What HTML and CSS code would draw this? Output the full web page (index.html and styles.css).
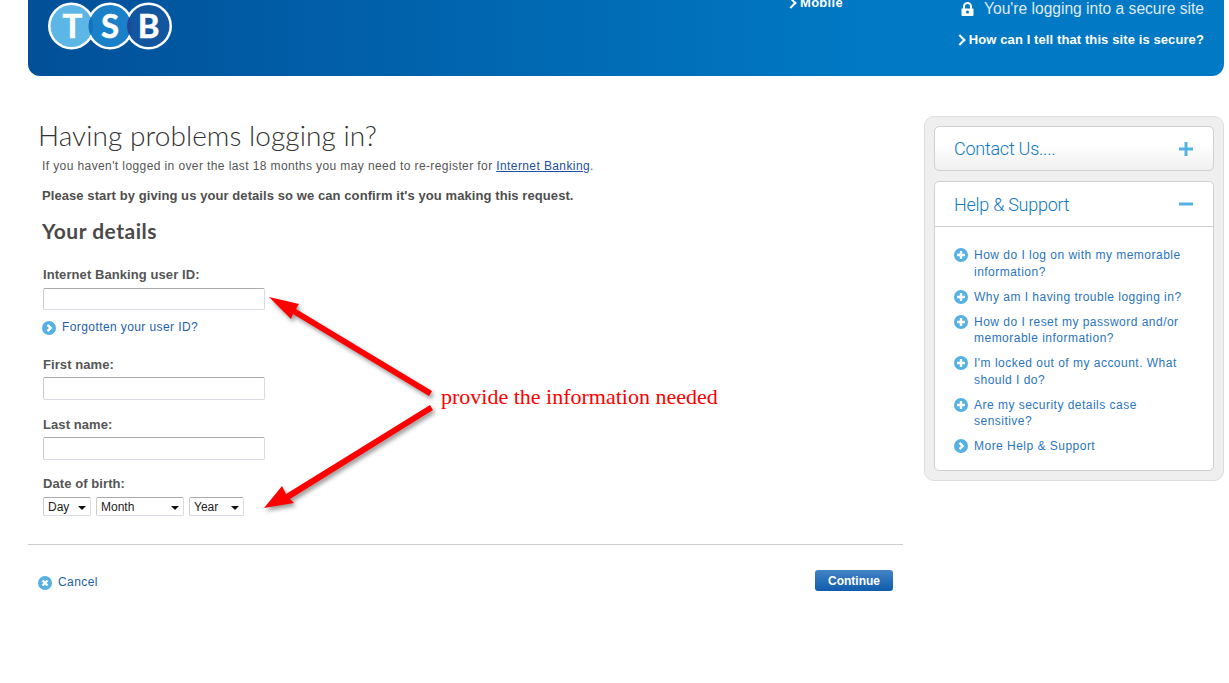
FILE: index.html
```html
<!DOCTYPE html>
<html lang="en">
<head>
<meta charset="utf-8">
<title>Having problems logging in?</title>
<link rel="stylesheet" href="styles.css">
</head>
<body>
<header class="top">
  <svg class="logo" width="124" height="52" viewBox="0 0 124 52">
    <g fill="#fff">
      <circle cx="23.500" cy="26" r="23.500"/>
      <circle cx="62" cy="26" r="23.500"/>
      <circle cx="100.500" cy="26" r="23.500"/>
    </g>
    <circle cx="23.500" cy="26" r="21" fill="#5cb6e6"/>
    <circle cx="100.500" cy="26" r="21" fill="#11569f"/>
    <circle cx="62" cy="26" r="21" fill="#1a80c8"/>
    <path d="M42.750 16.700A21 21 0 0 1 42.750 35.300A21 21 0 0 1 42.750 16.700z" fill="#1272ba"/>
    <path d="M81.250 16.700A21 21 0 0 1 81.250 35.300A21 21 0 0 1 81.250 16.700z" fill="#24479b"/>
    <text class="logo-t" x="24.500" y="38">T</text>
    <text class="logo-t" x="62" y="38">S</text>
    <text class="logo-t" x="100.500" y="38">B</text>
  </svg>
  <a class="mobile chev" href="#">Mobile</a>
  <div class="secure">
    <div class="secure-line">
      <svg width="13" height="15" viewBox="0 0 13 15"><path d="M3 7V4.500a3.500 3.500 0 0 1 7 0V7" fill="none" stroke="#fff" stroke-width="2"/><path fill-rule="evenodd" d="M1 6.500h11a.500.500 0 0 1 .500.500v6a1 1 0 0 1-1 1h-10a1 1 0 0 1-1-1V7a.500.500 0 0 1 .500-.500zM6.500 8.500a1.500 1.500 0 1 0 0 3 1.500 1.500 0 0 0 0-3z" fill="#fff"/></svg>
      <span>You're logging into a secure site</span>
    </div>
    <a class="secure-link chev" href="#">How can I tell that this site is secure?</a>
  </div>
</header>

<main class="page">
  <section class="content">
    <div class="form-area">
      <h1>Having problems logging in?</h1>
      <p class="intro">If you haven't logged in over the last 18 months you may need to re-register for <a href="#">Internet Banking</a>.</p>
      <p class="lead">Please start by giving us your details so we can confirm it's you making this request.</p>
      <h2>Your details</h2>
      <label class="lbl first" for="uid">Internet Banking user ID:</label>
      <input class="txt" id="uid" type="text">
      <a class="icon-link forgot" href="#"><svg class="ic" viewBox="0 0 14 14"><use href="#go"/></svg>Forgotten your user ID?</a>
      <label class="lbl l-first" for="fn">First name:</label>
      <input class="txt tall" id="fn" type="text">
      <label class="lbl l-last" for="ln">Last name:</label>
      <input class="txt tall" id="ln" type="text">
      <label class="lbl l-dob">Date of birth:</label>
      <div class="dob">
        <span class="sel day">Day</span>
        <span class="sel month">Month</span>
        <span class="sel year">Year</span>
      </div>
    </div>
    <div class="actions">
      <a class="icon-link cancel" href="#"><svg class="ic" viewBox="0 0 14 14"><circle cx="7" cy="7" r="7" fill="#55b1e4"/><path d="M4.500 4.500l5 5M9.500 4.500l-5 5" stroke="#fff" stroke-width="2.400"/></svg>Cancel</a>
      <button class="continue" type="button">Continue</button>
    </div>
  </section>

  <aside class="side">
    <div class="panel closed">
      <span class="panel-title">Contact Us....</span>
      <svg width="14" height="14" viewBox="0 0 14 14"><path d="M0 7h14M7 0v14" stroke="#55b1e4" stroke-width="3"/></svg>
    </div>
    <div class="panel open">
      <div class="panel-head">
        <span class="panel-title">Help &amp; Support</span>
        <svg width="14" height="14" viewBox="0 0 14 14"><path d="M0 6h14" stroke="#55b1e4" stroke-width="3"/></svg>
      </div>
      <ul class="help">
        <li><svg class="ic" viewBox="0 0 14 14"><use href="#plus"/></svg><a href="#">How do I log on with my memorable information?</a></li>
        <li><svg class="ic" viewBox="0 0 14 14"><use href="#plus"/></svg><a href="#">Why am I having trouble logging in?</a></li>
        <li><svg class="ic" viewBox="0 0 14 14"><use href="#plus"/></svg><a href="#">How do I reset my password and/or memorable information?</a></li>
        <li><svg class="ic" viewBox="0 0 14 14"><use href="#plus"/></svg><a href="#">I'm locked out of my account. What should I do?</a></li>
        <li><svg class="ic" viewBox="0 0 14 14"><use href="#plus"/></svg><a href="#">Are my security details case sensitive?</a></li>
        <li><svg class="ic" viewBox="0 0 14 14"><use href="#go"/></svg><a href="#">More Help &amp; Support</a></li>
      </ul>
    </div>
  </aside>
</main>

<svg class="arrows" width="1229" height="683" viewBox="0 0 1229 683">
  <g fill="#f00" stroke="none">
    <path d="M432 391 L296 309 L299 304 L269 297 L291 319 L293 314 L429 396 Z"/>
    <path d="M430 405 L286 494 L282 486 L264 508 L294 503 L290 499 L433 410 Z"/>
  </g>
</svg>
<div class="note">provide the information needed</div>

<svg width="0" height="0" class="defs">
  <defs>
    <g id="plus"><circle cx="7" cy="7" r="7" fill="#55b1e4"/><path d="M3 7h8M7 3v8" stroke="#fff" stroke-width="2.400"/></g>
    <g id="go"><circle cx="7" cy="7" r="7" fill="#55b1e4"/><path d="M5.500 3.800L8.700 7L5.500 10.200" fill="none" stroke="#fff" stroke-width="2.400"/></g>
  </defs>
</svg>
</body>
</html>
```
FILE: styles.css
```css
* { box-sizing: border-box; }
html, body { margin: 0; padding: 0; }
body {
  width: 1229px;
  height: 683px;
  overflow: hidden;
  background: #fff;
  font-family: "Liberation Sans", Arial, sans-serif;
  color: #555;
  position: relative;
}
a { color: #1d5fa8; text-decoration: none; }

.top {
  margin-left: 28px;
  width: 1196px;
  height: 76px;
  border-radius: 0 0 12px 12px;
  background: linear-gradient(90deg, #015098 0%, #0164ae 35%, #0179c4 70%, #0179c4 100%);
  display: flex;
  align-items: flex-start;
  color: #fff;
  padding-right: 20px;
}
.logo { margin-left: 20px; flex: none; }
.logo-t { font: 700 33px "Lato", "Liberation Sans", sans-serif; fill: #fff; text-anchor: middle; stroke: #fff; stroke-width: .5px; }
.mobile {
  margin-left: 617px;
  margin-top: -5px;
  color: #fff;
  font-weight: 700;
  font-size: 13px;
  line-height: 15px;
  letter-spacing: .3px;
}
.chev { position: relative; padding-left: 11px; }
.chev::before {
  content: "";
  position: absolute;
  left: -2px;
  top: 4px;
  width: 6px;
  height: 6px;
  border-top: 2px solid #fff;
  border-right: 2px solid #fff;
  transform: rotate(45deg);
}
.secure {
  margin-left: auto;
  display: flex;
  flex-direction: column;
  align-items: flex-end;
}
.secure-line {
  display: flex;
  align-items: center;
  gap: 10px;
  height: 18px;
  font-size: 15.600px;
  color: #dfeaf4;
}
.secure-link {
  margin-top: 14px;
  color: #fff;
  font-weight: 700;
  font-size: 13px;
  line-height: 15px;
  letter-spacing: .1px;
}

.page {
  display: flex;
  margin-left: 28px;
  margin-top: 40px;
  width: 1196px;
  justify-content: space-between;
  align-items: flex-start;
}
.content { width: 875px; }
.form-area {
  height: 429px;
  border-bottom: 1px solid #ccc;
  padding-left: 14px;
  display: flex;
  flex-direction: column;
  align-items: flex-start;
}
h1 {
  margin: 1px 0 0 -4px;
  font: 300 28px/36px "Lato", sans-serif;
  letter-spacing: .07px;
  color: #333;
}
.intro { margin: 6px 0 0; font-size: 12px; line-height: 15px; letter-spacing: .4px; color: #555; }
.intro a { color: #1d4f9c; text-decoration: underline; }
.lead { margin: 14px 0 0; font-size: 13px; line-height: 15px; letter-spacing: .08px; font-weight: 700; color: #4e4e4e; }
h2 { margin: 16px 0 0; font: 700 21px/24px "Lato", sans-serif; letter-spacing: .5px; color: #4a4a4a; }
.lbl { display: block; margin-left: 1px; font-size: 13px; line-height: 15px; letter-spacing: .08px; font-weight: 700; color: #555; }
.first { margin-top: 24px; }
.l-first { margin-top: 22px; }
.l-last { margin-top: 17px; }
.l-dob { margin-top: 16px; }
.txt {
  display: block;
  margin: 6px 0 0 1px;
  width: 222px;
  height: 22px;
  background: #fff;
  border: 1px solid #d9dde3;
  border-top-color: #aaa;
  border-left-color: #ccc;
  border-radius: 2px;
  padding: 0 4px;
}
.tall { margin-top: 5px; height: 23px; }
.icon-link { display: flex; align-items: center; gap: 6px; font-size: 12px; line-height: 15px; letter-spacing: .41px; }
.ic { width: 14px; height: 14px; flex: none; }
.forgot { margin-top: 10px; }
.dob { display: flex; gap: 5px; margin: 6px 0 0 1px; }
.sel {
  position: relative;
  display: block;
  height: 19px;
  line-height: 18px;
  font-size: 12px;
  color: #222;
  padding-left: 4px;
  background: #fff;
  border: 1px solid #d9dde3;
  border-top-color: #aaa;
  border-left-color: #ccc;
  border-radius: 2px;
}
.sel::after {
  content: "";
  position: absolute;
  right: 4px;
  top: 8px;
  border: 4px solid transparent;
  border-top-color: #111;
  border-bottom-width: 0;
}
.day { width: 48px; }
.month { width: 88px; }
.year { width: 55px; }

.actions {
  display: flex;
  justify-content: space-between;
  align-items: center;
  padding: 25px 10px 0;
}
.cancel { padding-top: 4px; }
.continue {
  width: 78px;
  height: 21px;
  padding: 0;
  border: 0;
  border-radius: 3px;
  background: linear-gradient(#4383c4, #0f5cae);
  color: #fff;
  font: 700 12px "Liberation Sans", sans-serif;
}

.side {
  width: 300px;
  height: 365px;
  background: #efefef;
  border: 1px solid #ddd;
  border-radius: 10px;
  padding: 9px;
  display: flex;
  flex-direction: column;
  gap: 10px;
}
.panel {
  background: #fff;
  border: 1px solid #d0d0d0;
  border-radius: 5px;
}
.open { flex: 1; }
.panel-title {
  font: 300 18px/22px "Roboto", sans-serif;
  letter-spacing: -.25px;
  color: #0e78c2;
}
.closed {
  height: 45px;
  display: flex;
  justify-content: space-between;
  align-items: center;
  padding: 0 20px 0 19px;
  background: linear-gradient(#fff 40%, #f0f0f0);
}
.panel-head {
  height: 45px;
  display: flex;
  justify-content: space-between;
  align-items: center;
  padding: 2px 20px 0 19px;
  border-bottom: 1px solid #d0d0d0;
}
.help { list-style: none; margin: 0; padding: 20px 20px 0 19px; }
.help li { display: flex; gap: 6px; margin-bottom: 8.400px; font-size: 12px; line-height: 16.600px; letter-spacing: .48px; }
.help li .ic { margin-top: 1px; }
.help a { color: #2a75bd; }

.arrows {
  position: absolute;
  left: 0;
  top: 0;
  pointer-events: none;
  filter: drop-shadow(2px 3px 2px rgba(0,0,0,.4));
}
.note {
  position: absolute;
  left: 441px;
  top: 384px;
  font: 22px/26px "Liberation Serif", serif;
  color: #f00;
}
.defs { position: absolute; }
```
